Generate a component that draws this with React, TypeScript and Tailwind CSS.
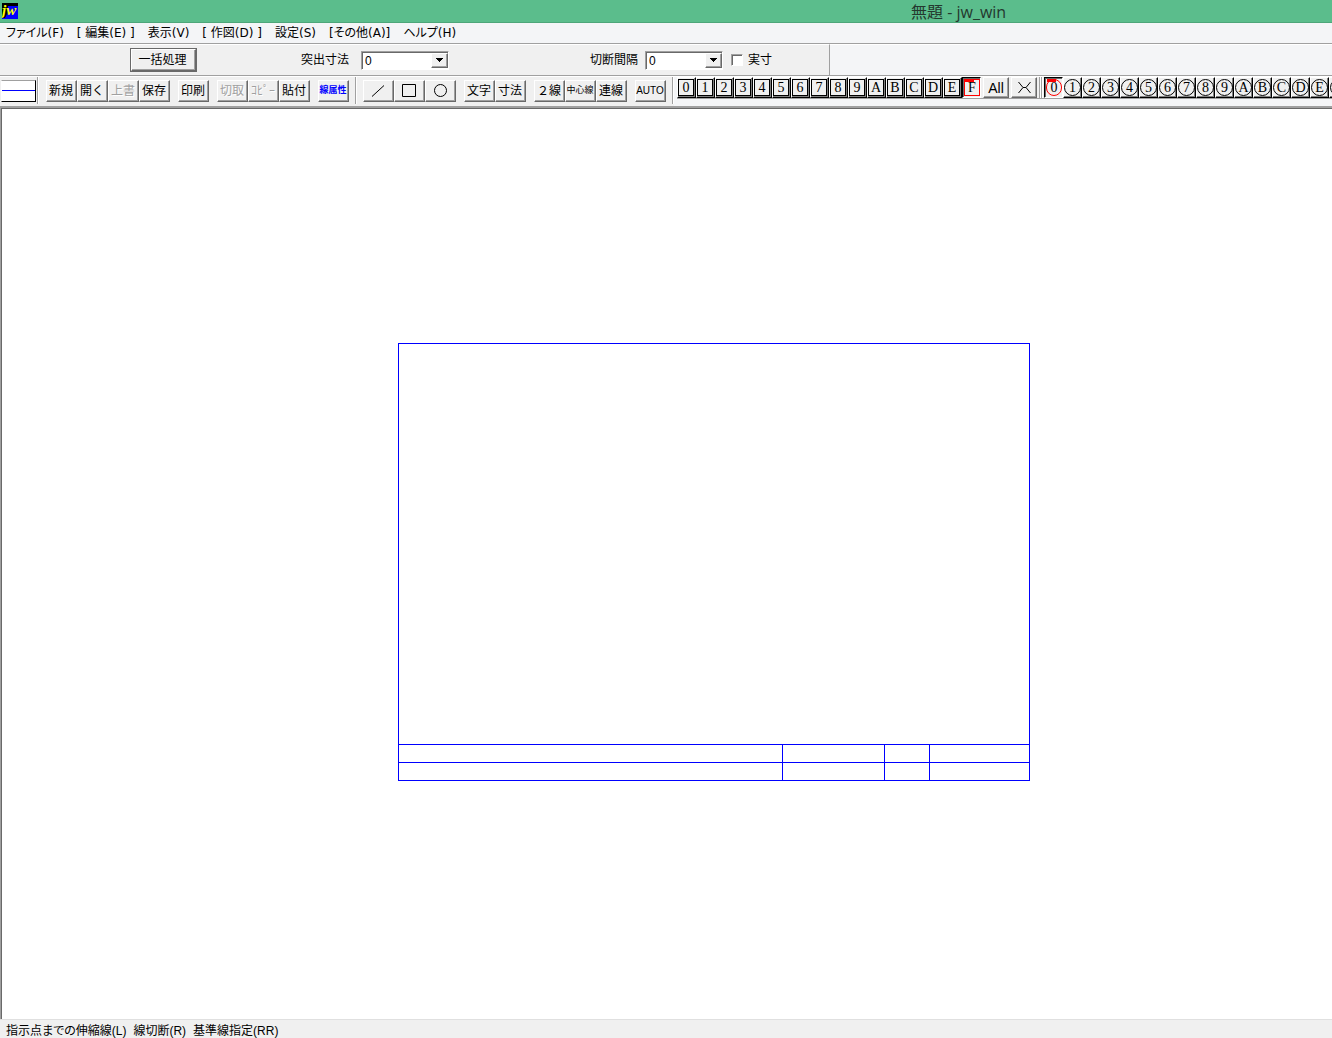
import clsx from 'clsx';
import type { ReactNode } from 'react';

const MENUS = ['ファイル(F)', '[ 編集(E) ]', '表示(V)', '[ 作図(D) ]', '設定(S)', '[その他(A)]', 'ヘルプ(H)'];
const LAYERS = ['0', '1', '2', '3', '4', '5', '6', '7', '8', '9', 'A', 'B', 'C', 'D', 'E', 'F'];

const RAISED =
  'border border-t-white border-l-white border-r-[#696969] border-b-[#696969] shadow-[inset_-1px_-1px_0_#a0a0a0] bg-[#f0f0f0]';
const SUNKEN =
  'border border-t-[#a0a0a0] border-l-[#a0a0a0] border-r-white border-b-white shadow-[inset_1px_1px_0_#696969] bg-white';

function ToolButton({
  children,
  label,
  className,
  disabled,
}: {
  children: ReactNode;
  label?: string;
  className?: string;
  disabled?: boolean;
}) {
  return (
    <button
      aria-label={label}
      disabled={disabled}
      className={clsx(
        'flex h-[22px] w-[31px] shrink-0 items-center justify-center whitespace-nowrap pr-[1px] leading-none',
        RAISED,
        disabled && 'text-[#a0a0a0] [text-shadow:1px_1px_0_#fff]',
        className ?? 'text-[12px]'
      )}
    >
      {children}
    </button>
  );
}

function Group({ children }: { children: ReactNode }) {
  return <div className="flex shrink-0">{children}</div>;
}

function Separator() {
  return <div className="h-full w-[2px] shrink-0 self-stretch border-l border-r border-l-[#a0a0a0] border-r-white" />;
}

function Combo({ id, className }: { id: string; className: string }) {
  return (
    <div className={clsx('relative h-[19px] shrink-0', SUNKEN, className)}>
      <select id={id} className="h-full w-full appearance-none bg-transparent pl-[3px] text-[12px] leading-none">
        <option>0</option>
      </select>
      <span
        className={clsx(
          'pointer-events-none absolute top-[1px] right-0 flex h-[15px] w-[17px] items-center justify-center',
          RAISED
        )}
      >
        <svg width="7" height="4" viewBox="0 0 7 4" shapeRendering="crispEdges">
          <path d="M0 0h7v1h-1v1h-1v1h-1v1h-1v-1h-1v-1h-1v-1h-1z" />
        </svg>
      </span>
    </div>
  );
}

function LayerButton({ name, round, active }: { name: string; round?: boolean; active?: boolean }) {
  return (
    <button
      className={clsx(
        'relative flex h-[21px] w-[19px] shrink-0 items-end justify-center border bg-[#f0f0f0] pb-[1px] font-["Liberation_Serif",serif] text-[14px] leading-none',
        active
          ? 'border-t-black border-l-black border-r-white border-b-white pl-[1px] shadow-[inset_1px_1px_0_#696969]'
          : 'border-t-white border-l-white border-r-black border-b-black shadow-[inset_-1px_-1px_0_#808080]',
        !round && !active && 'pr-[1px]'
      )}
    >
      {active && <span className="absolute top-[1px] left-[2px] h-[3px] w-[9px] bg-[#f00]" />}
      <span
        className={clsx(
          'flex h-[17px] w-full items-center justify-center border pt-[1px]',
          round && 'rounded-full',
          active ? 'border-[#f00]' : 'border-black'
        )}
      >
        {name}
      </span>
    </button>
  );
}

function Drawing() {
  return (
    <svg
      className="mt-[234px] ml-[396px] block shrink-0"
      width="632"
      height="438"
      viewBox="0 0 632 438"
      fill="none"
      stroke="#00f"
      shapeRendering="crispEdges"
    >
      <path d="M.5.5h631v437H.5zM.5 401.5h631M.5 419.5h631M384.5 401.5v36M486.5 401.5v36M531.5 401.5v36" />
    </svg>
  );
}

export default function App() {
  return (
    <div className='flex min-h-screen flex-col overflow-hidden bg-[#f4f5f7] font-["Liberation_Sans","Noto_Sans_CJK_JP",sans-serif] text-[12px] text-black'>
      {/* Title bar */}
      <header className="flex h-[23px] items-center border-b border-[#4da679] bg-[#5bbd8c] pl-[2px]">
        <svg width="16" height="16" viewBox="0 0 16 16">
          <path fill="#000" d="M0 0h16v16H0z" />
          <path fill="#00f" d="M6 3h10v13H0v-1h3l2-4z" />
          <text
            x="0"
            y="12"
            fill="#ff0"
            fontFamily="Liberation Serif"
            fontSize="15"
            fontStyle="italic"
            fontWeight="bold"
          >
            jw
          </text>
        </svg>
        <h1 className='ml-[893px] whitespace-nowrap pt-[2px] font-["Open_Sans","Noto_Sans_CJK_JP",sans-serif] text-[16px] leading-none text-[#24382e]'>
          無題 - jw_win
        </h1>
      </header>

      {/* Menu bar */}
      <nav className='flex h-[20px] items-center gap-[13px] pl-[6px] font-["DejaVu_Sans","Noto_Sans_CJK_JP",sans-serif] leading-none [font-feature-settings:"palt"]'>
        {MENUS.map((menu) => (
          <button key={menu} className="whitespace-nowrap">
            {menu}
          </button>
        ))}
      </nav>

      {/* Command options */}
      <div className="flex h-[33px] border-t border-b border-[#a0a0a0]">
        <div className="flex w-[830px] shrink-0 items-center border-t border-r border-t-white border-r-[#a0a0a0] bg-[#f0f0f0] pl-[130px]">
          <div className="border border-[#696969]">
            <button className={clsx('h-[22px] w-[65px] whitespace-nowrap pr-[2px] leading-none', RAISED)}>
              一括処理
            </button>
          </div>
          <label htmlFor="extend" className="ml-[104px] w-[60px] shrink-0">
            突出寸法
          </label>
          <Combo id="extend" className="w-[88px]" />
          <label htmlFor="cut" className="ml-[141px] w-[55px] shrink-0">
            切断間隔
          </label>
          <Combo id="cut" className="w-[78px]" />
          <input id="actual" type="checkbox" className={clsx('ml-2 size-[12px] appearance-none', SUNKEN)} />
          <label htmlFor="actual" className="ml-[5px]">
            実寸
          </label>
        </div>
        <div className="grow border-t border-white" />
      </div>

      {/* Toolbars */}
      <div className="flex h-[31px] items-start border-t border-b border-t-white border-b-[#a0a0a0]">
        <div className="flex h-full shrink-0 items-center gap-2 border-b-2 border-[#f0f0f0] bg-[#f0f0f0] pl-[1px]">
          <div className="-mr-2 flex h-full items-center gap-[1px]">
            <button
              aria-label="線種"
              className="flex h-[22px] w-[35px] items-center border border-t-[#a0a0a0] border-l-white border-r-black border-b-black bg-white"
            >
              <span className="h-px w-full bg-[#00f]" />
            </button>
            <Separator />
          </div>
          <div className="ml-[7px] flex items-center gap-2">
            <Group>
              <ToolButton>新規</ToolButton>
              <ToolButton>開く</ToolButton>
              <ToolButton disabled>上書</ToolButton>
              <ToolButton>保存</ToolButton>
            </Group>
            <ToolButton>印刷</ToolButton>
            <Group>
              <ToolButton disabled>切取</ToolButton>
              <ToolButton disabled>ｺﾋﾟｰ</ToolButton>
              <ToolButton>貼付</ToolButton>
            </Group>
            <ToolButton className="text-[9px] font-bold text-[#00f]">線属性</ToolButton>
          </div>
          <div className="-mx-[2px] h-full">
            <Separator />
          </div>
          <Group>
            <ToolButton label="線">
              <svg width="14" height="12" viewBox="0 0 14 12" stroke="#000">
                <path d="M1 11.5 13 .5" />
              </svg>
            </ToolButton>
            <ToolButton label="矩形">
              <svg width="14" height="13" viewBox="0 0 14 13" fill="none" stroke="#000">
                <path d="M.5.5h13v12H.5z" />
              </svg>
            </ToolButton>
            <ToolButton label="円">
              <svg width="13" height="13" viewBox="0 0 13 13" fill="none" stroke="#000">
                <circle cx="6.5" cy="6.5" r="6" />
              </svg>
            </ToolButton>
          </Group>
          <Group>
            <ToolButton>文字</ToolButton>
            <ToolButton>寸法</ToolButton>
          </Group>
          <Group>
            <ToolButton>２線</ToolButton>
            <ToolButton className="text-[9px]">中心線</ToolButton>
            <ToolButton>連線</ToolButton>
          </Group>
          <ToolButton className="text-[10px]">AUTO</ToolButton>
          <div className="-ml-[2px] h-full">
            <Separator />
          </div>
        </div>

        <div className="ml-[3px] flex min-w-0 grow overflow-hidden border-b border-[#a0a0a0] bg-[#f0f0f0]">
          {LAYERS.map((name) => (
            <LayerButton key={name} name={name} active={name === 'F'} />
          ))}
          <button className={clsx('ml-[2px] h-[21px] w-[26px] shrink-0 text-[14px] leading-none', RAISED)}>All</button>
          <button
            aria-label="×"
            className={clsx('ml-[2px] flex h-[21px] w-[26px] shrink-0 items-center justify-center', RAISED)}
          >
            <svg width="13" height="11" viewBox="0 0 13 11" fill="none" stroke="#000">
              <path d="M.5 0 5 5.5h3L12.5 0M.5 11 5 5.5h3l4.5 5.5" />
            </svg>
          </button>
          <div className="mr-[1px] ml-[2px] flex">
            <Separator />
            <Separator />
          </div>
          {LAYERS.map((name) => (
            <LayerButton key={name} name={name} round active={name === '0'} />
          ))}
        </div>
      </div>

      {/* Drawing area */}
      <main className="flex grow border-t border-l border-[#a0a0a0] bg-white">
        <div className="grow border-t border-l border-[#696969]">
          <Drawing />
        </div>
      </main>

      {/* Status bar */}
      <footer className='flex h-[19px] items-center gap-[7px] border-t border-[#e0e0e0] bg-[#f0f0f0] pt-[3px] pl-[6px] leading-none [font-feature-settings:"palt"]'>
        <span>指示点までの伸縮線(L)</span>
        <span>線切断(R)</span>
        <span>基準線指定(RR)</span>
      </footer>
    </div>
  );
}
